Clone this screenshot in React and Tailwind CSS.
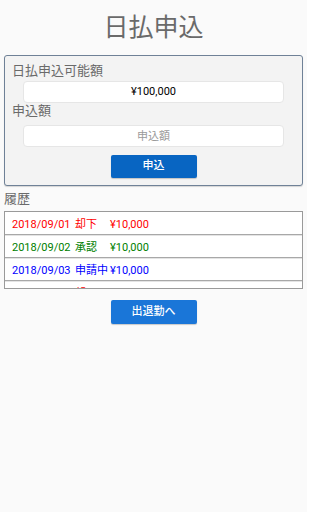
import React from 'react';

// 日払申込 screen
const history = [
  { date: '2018/09/01', status: '却下', amount: '¥10,000', color: 'text-[#ff0000]' },
  { date: '2018/09/02', status: '承認', amount: '¥10,000', color: 'text-[#008000]' },
  { date: '2018/09/03', status: '申請中', amount: '¥10,000', color: 'text-[#0000ff]' },
  { date: '2018/09/04', status: '却下', amount: '¥10,000', color: 'text-[#ff0000]' },
  { date: '2018/09/05', status: '承認', amount: '¥10,000', color: 'text-[#008000]' },
];

const font = { fontFamily: 'Roboto, "Noto Sans CJK JP", sans-serif' };

const App = () => {
  return (
    <div className="min-h-[512px] w-[307px] bg-[#fafafa]" style={font}>
      {/* Title */}
      <div className="h-[55px] flex items-center justify-center text-[25px] text-[#6a6a6a] leading-none">
        日払申込
      </div>

      {/* Form panel */}
      <div className="mx-[4px] border border-[#6f8197] rounded-[3px] bg-[#f3f3f3] pt-[7px] pb-[7px] shadow-[0_1px_1px_rgba(0,0,0,0.15)]">
        <div className="pl-[7px] text-[13px] leading-[16px] text-[#6a6a6a]">日払申込可能額</div>
        <div className="mx-[18px] mt-[2px] h-[22px] bg-white border border-[#e6e6e6] rounded-[4px] flex items-center justify-center text-[11px] text-black">
          ¥100,000
        </div>
        <div className="pl-[7px] text-[13px] leading-[16px] text-[#6a6a6a]">申込額</div>
        <input
          className="block mx-[18px] mt-[6px] h-[22px] w-[261px] bg-white border border-[#e6e6e6] rounded-[4px] text-center text-[11px] placeholder:text-[#9a9a9a] outline-none"
          placeholder="申込額"
        />
        <div className="flex justify-center mt-[8px]">
          <button className="w-[86px] h-[23px] bg-[#0865c2] rounded-[2px] text-white text-[11px] font-medium shadow-[0_1px_1px_rgba(0,0,0,0.2)]">
            申込
          </button>
        </div>
      </div>

      {/* History */}
      <div className="pl-[4px] pt-[5px] pb-[4px] text-[13px] leading-[16px] text-[#6a6a6a]">履歴</div>
      <div className="mx-[4px] h-[78px] overflow-hidden border border-[#9a9a9a] bg-white">
        {history.map((row, i) => (
          <div
            key={i}
            className={`h-[23px] flex items-center pt-[3px] pl-[7px] text-[11px] leading-[13px] border-b border-[#a8a8a8] shadow-[0_1px_0_#e4e4e4] ${row.color}`}
          >
            <span className="w-[63px]">{row.date}</span>
            <span className="w-[35px]">{row.status}</span>
            <span>{row.amount}</span>
          </div>
        ))}
      </div>

      {/* Bottom button */}
      <div className="flex justify-center mt-[11px]">
        <button className="w-[86px] h-[24px] bg-[#1a76d8] rounded-[2px] text-white text-[11px] font-medium shadow-[0_1px_1px_rgba(0,0,0,0.2)]">
          出退勤へ
        </button>
      </div>
    </div>
  );
};

export default App;
